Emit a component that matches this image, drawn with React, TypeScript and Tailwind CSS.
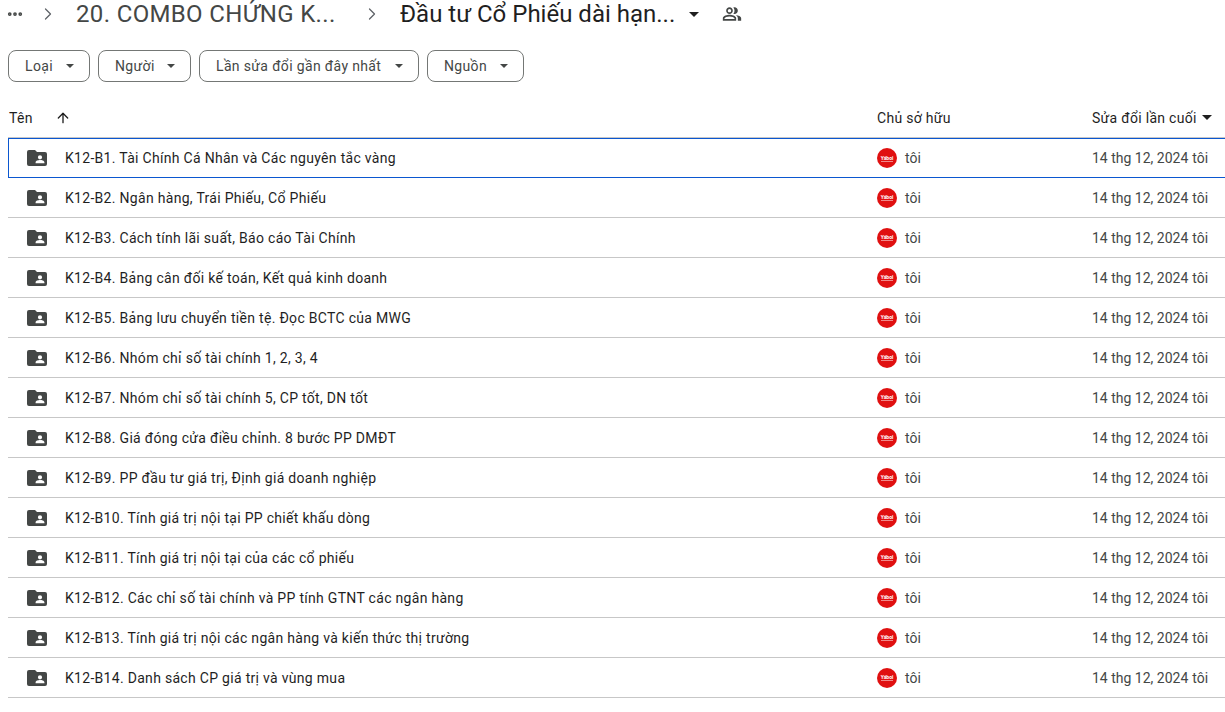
import { ArrowUp, ChevronRight, Ellipsis } from 'lucide-react';

const folders = [
    'K12-B1. Tài Chính Cá Nhân và Các nguyên tắc vàng',
    'K12-B2. Ngân hàng, Trái Phiếu, Cổ Phiếu',
    'K12-B3. Cách tính lãi suất, Báo cáo Tài Chính',
    'K12-B4. Bảng cân đối kế toán, Kết quả kinh doanh',
    'K12-B5. Bảng lưu chuyển tiền tệ. Đọc BCTC của MWG',
    'K12-B6. Nhóm chỉ số tài chính 1, 2, 3, 4',
    'K12-B7. Nhóm chỉ số tài chính 5, CP tốt, DN tốt',
    'K12-B8. Giá đóng cửa điều chỉnh. 8 bước PP DMĐT',
    'K12-B9. PP đầu tư giá trị, Định giá doanh nghiệp',
    'K12-B10. Tính giá trị nội tại PP chiết khấu dòng',
    'K12-B11. Tính giá trị nội tại của các cổ phiếu',
    'K12-B12. Các chỉ số tài chính và PP tính GTNT các ngân hàng',
    'K12-B13. Tính giá trị nội các ngân hàng và kiến thức thị trường',
    'K12-B14. Danh sách CP giá trị và vùng mua',
];

const filters = [
    { label: 'Loại', width: 'w-[82px]' },
    { label: 'Người', width: 'w-[93px]' },
    { label: 'Lần sửa đổi gần đây nhất', width: 'w-[220px]' },
    { label: 'Nguồn', width: 'w-[97px]' },
];

function Caret({ className }: { className: string }) {
    return (
        <svg viewBox="0 0 10 5" className={className} fill="currentColor">
            <path d="M0 0h10L5 5z" />
        </svg>
    );
}

function SharedFolder() {
    return (
        <svg viewBox="0 0 20 16" className="w-5 h-4 shrink-0 text-[#444746]" fill="currentColor">
            <path
                fillRule="evenodd"
                d="M2 0h6l2 2h8a2 2 0 0 1 2 2v10a2 2 0 0 1-2 2H2a2 2 0 0 1-2-2V2a2 2 0 0 1 2-2zm11 5.2a2.100 2.100 0 1 0 0 4.200 2.100 2.100 0 0 0 0-4.200zM8.600 13.200h8.800v-.9c0-1.500-2.900-2.200-4.400-2.200s-4.400.7-4.400 2.200z"
            />
        </svg>
    );
}

function PeopleOutline() {
    return (
        <svg viewBox="0 0 24 24" className="w-5 h-5 text-[#444746]" fill="currentColor">
            <path d="M16.670 13.130C18.040 14.060 19 15.320 19 17v3h4v-3c0-2.180-3.570-3.470-6.330-3.870zM15 12c2.210 0 4-1.790 4-4s-1.790-4-4-4c-.47 0-.91.1-1.330.24C14.500 5.270 15 6.580 15 8s-.5 2.730-1.330 3.760c.42.14.86.24 1.330.24zM9 12c2.210 0 4-1.790 4-4s-1.790-4-4-4-4 1.790-4 4 1.790 4 4 4zm0-6c1.100 0 2 .9 2 2s-.9 2-2 2-2-.9-2-2 .9-2 2-2zM9 13c-2.670 0-8 1.340-8 4v3h16v-3c0-2.660-5.330-4-8-4zm6 5H3v-.99C3.200 16.290 6.300 15 9 15s5.800 1.290 6 2z" />
        </svg>
    );
}

function Avatar() {
    return (
        <div className="w-5 h-5 rounded-full bg-[#e01010] flex flex-col items-center justify-center shrink-0 overflow-hidden">
            <span className="text-[5px] leading-[6px] font-bold text-white">Yáboi</span>
            <span className="w-3 h-px bg-white/50"></span>
        </div>
    );
}

export default function App() {
    return (
        <div className="w-[1225px] h-[712px] overflow-hidden bg-white font-['Roboto',sans-serif]">
            {/* Breadcrumb */}
            <div className="h-7 flex items-center text-[24px] leading-7">
                <Ellipsis className="w-[18px] h-[18px] ml-[6px] text-[#444746]" strokeWidth={3} />
                <ChevronRight className="w-5 h-5 ml-[14px] text-[#5f6368]" strokeWidth={1.5} />
                <span className="ml-[18px] w-[261px] whitespace-nowrap tracking-[0.35px] text-[#444746]">20. COMBO CHỨNG K...</span>
                <ChevronRight className="w-5 h-5 ml-[25px] text-[#5f6368]" strokeWidth={1.5} />
                <span className="ml-[18px] w-[275px] whitespace-nowrap text-[#1f1f1f]">Đầu tư Cổ Phiếu dài hạn...</span>
                <Caret className="w-[10px] h-[5px] ml-[14px] text-[#1f1f1f]" />
                <div className="ml-[23px]">
                    <PeopleOutline />
                </div>
            </div>

            {/* Filters */}
            <div className="flex gap-2 pl-2 mt-[22px]">
                {filters.map((f) => (
                    <button
                        key={f.label}
                        className={`${f.width} h-8 flex items-center justify-between pl-[16px] pr-[15px] rounded-lg border border-[#747775] text-sm tracking-[0.35px] text-[#444746]`}
                    >
                        <span className="whitespace-nowrap">{f.label}</span>
                        <Caret className="w-2 h-1 text-[#444746]" />
                    </button>
                ))}
            </div>

            {/* Header */}
            <div className="flex items-center h-[56px] pt-4 ml-2 border-b border-[#c7c7c7] text-sm tracking-[0.3px] text-[#1f1f1f]">
                <span className="ml-[1px] w-[46px]">Tên</span>
                <ArrowUp className="w-4 h-4" strokeWidth={2} />
                <span className="ml-[806px] w-[215px]">Chủ sở hữu</span>
                <span>Sửa đổi lần cuối</span>
                <Caret className="w-[10px] h-[5px] ml-[5px]" />
            </div>

            {/* Rows */}
            <div className="ml-2">
                {folders.map((name, i) => (
                    <div
                        key={name}
                        className={`h-10 flex items-center text-sm ${i === 0 ? 'border border-r-0 border-[#0b57d0]' : 'border-b border-[#c7c7c7]'}`}
                    >
                        <div className={`${i === 0 ? 'ml-[18px]' : 'ml-[19px]'} w-[38px]`}>
                            <SharedFolder />
                        </div>
                        <span className="w-[812px] tracking-[0.3px] text-[#1f1f1f] whitespace-nowrap">{name}</span>
                        <Avatar />
                        <span className="ml-2 w-[187px] text-[#444746]">tôi</span>
                        <span className="text-[#444746] whitespace-nowrap">14 thg 12, 2024</span>
                        <span className="ml-[4px] text-[#444746]">tôi</span>
                    </div>
                ))}
            </div>
        </div>
    );
}
